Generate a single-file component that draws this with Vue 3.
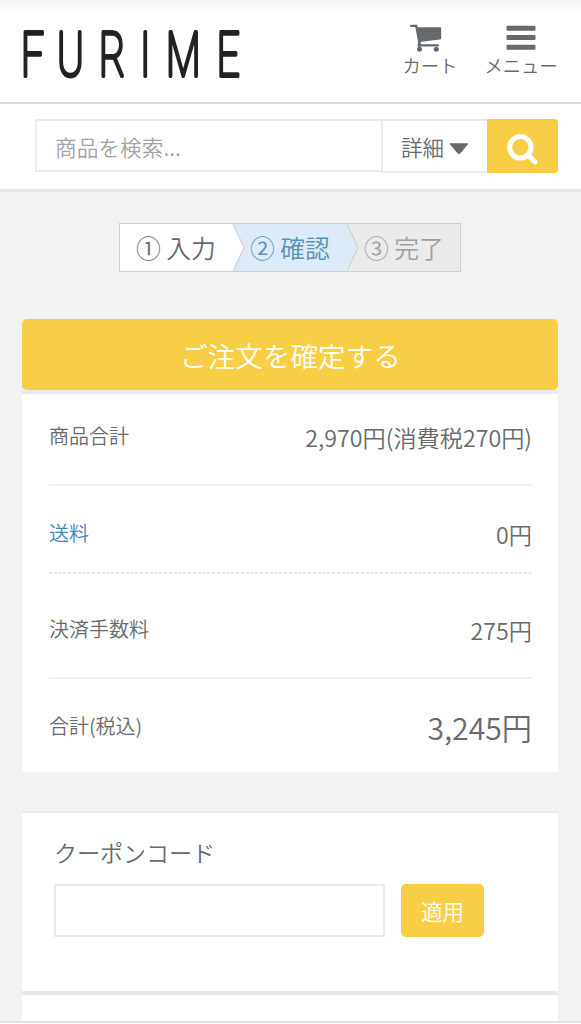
<template>
    <div class="page">
        <header class="header">
            <svg class="logo" width="222" height="56" viewBox="0 0 222 56">
                <text class="logo-text" transform="scale(0.65 1)" x="0 55.5 120 183 223 301" y="50">FURIME</text>
            </svg>
            <nav class="nav">
                <a class="nav-item cart">
                    <svg width="32" height="28" viewBox="0 0 32 28">
                        <path d="M1.3 1.9H6.3L9.8 20.5" fill="none" stroke="#666a6d" stroke-width="2.4" stroke-linecap="round" />
                        <path d="M6 3.3H30Q31.2 3.3 31.2 4.5V14Q31.2 15.3 30 15.4L9.5 18Z" fill="#666a6d" />
                        <path d="M9 16.5V25M8.5 21.3H28" fill="none" stroke="#666a6d" stroke-width="2.2" stroke-linecap="round" />
                        <circle cx="9.5" cy="25.2" r="2.5" fill="#666a6d" />
                        <circle cx="26.3" cy="25.2" r="2.5" fill="#666a6d" />
                    </svg>
                    <span>カート</span>
                </a>
                <a class="nav-item menu">
                    <svg width="30" height="28" viewBox="0 0 30 28">
                        <g fill="#666a6d">
                            <rect x="0.5" y="1.7" width="29" height="5" rx="1.2" />
                            <rect x="0.5" y="11" width="29" height="5" rx="1.2" />
                            <rect x="0.5" y="20.7" width="29" height="5" rx="1.2" />
                        </g>
                    </svg>
                    <span>メニュー</span>
                </a>
            </nav>
        </header>

        <form class="search" @submit.prevent>
            <input v-model="keyword" type="text" placeholder="商品を検索..." />
            <button type="button" class="detail">
                詳細
                <svg width="20" height="12" viewBox="0 0 20 12">
                    <path d="M1 .8H18.8L10.8 10.5Q10 11.4 9.2 10.5Z" fill="#666a6d" stroke="#666a6d" stroke-linejoin="round" />
                </svg>
            </button>
            <button type="submit" class="submit" aria-label="検索">
                <svg width="34" height="34" viewBox="0 0 34 34" fill="none" stroke="#fff">
                    <circle cx="14.3" cy="14.3" r="10.7" stroke-width="5" />
                    <path d="M22.5 22.5L29 29" stroke-width="5" stroke-linecap="round" />
                </svg>
            </button>
        </form>

        <main class="main">
            <ol class="steps">
                <li v-for="s in steps" :key="s.label" :class="s.state">
                    {{ s.label }}
                    <svg v-if="s.state !== 'todo'" class="arrow" width="12" height="47" viewBox="0 0 12 47">
                        <path d="M0 0L11 23.5L0 47Z" />
                        <path class="edge" d="M0 0L11 23.5L0 47" />
                    </svg>
                </li>
            </ol>

            <button class="confirm">ご注文を確定する</button>

            <section class="summary">
                <div v-for="r in rows" :key="r.label" class="row" :class="r.type">
                    <span class="label">{{ r.label }}</span>
                    <span class="value">{{ r.value }}</span>
                </div>
            </section>

            <section class="coupon">
                <label for="coupon">クーポンコード</label>
                <div class="coupon-form">
                    <input id="coupon" v-model="coupon" type="text" />
                    <button>適用</button>
                </div>
            </section>
            <section class="next"></section>
        </main>
        <div class="bottom-bar"></div>
    </div>
</template>

<script setup>
import { ref } from 'vue'

const keyword = ref('')
const coupon = ref('')

const steps = [
    { label: '① 入力', state: 'done' },
    { label: '② 確認', state: 'current' },
    { label: '③ 完了', state: 'todo' }
]

const rows = [
    { label: '商品合計', value: '2,970円(消費税270円)', type: 'subtotal' },
    { label: '送料', value: '0円', type: 'shipping' },
    { label: '決済手数料', value: '275円', type: 'fee' },
    { label: '合計(税込)', value: '3,245円', type: 'total' }
]
</script>

<style>
body {
    margin: 0;
    background: #f2f2f2;
}
</style>

<style scoped>
.page,
.page * {
    box-sizing: border-box;
}

.page {
    display: flex;
    flex-direction: column;
    height: 1024px;
    overflow: hidden;
    background: #f2f2f2;
    color: #666a6d;
    font-family: "Noto Sans CJK JP", sans-serif;
    font-weight: 350;
}

button,
input {
    margin: 0;
    padding: 0;
    border: 0;
    border-radius: 0;
    font-family: inherit;
    font-weight: inherit;
    color: inherit;
}

.header {
    display: flex;
    justify-content: space-between;
    flex: none;
    height: 104px;
    padding: 22px 22px 0 21px;
    border-bottom: 2px solid #d9d9db;
    background: linear-gradient(#f4f4f4, #fff 14px);
}

.logo {
    margin-top: 4px;
    overflow: visible;
}

.logo-text {
    font-family: Roboto, sans-serif;
    font-size: 62px;
    font-weight: 100;
    fill: #222;
    stroke: #222;
    stroke-width: 4.2;
    stroke-linejoin: round;
}

.nav {
    display: flex;
    gap: 23px;
}

.nav-item {
    display: flex;
    flex-direction: column;
    align-items: center;
    width: 60px;
    font-size: 18.3px;
    line-height: 28px;
    white-space: nowrap;
}

.nav-item.menu {
    width: 76px;
}

.nav-item svg {
    margin: 2px 0 -1px;
}

.nav-item.cart svg {
    margin-right: 8px;
}

.search {
    display: flex;
    flex: none;
    height: 88px;
    padding: 15px 23px 0 35px;
    border-bottom: 3px solid #e6eaed;
    background: #fff;
}

.search input {
    width: 346px;
    height: 53px;
    padding: 1px 0 0 18px;
    border: 2px solid #ebeced;
    border-right: 0;
    font-size: 21.7px;
}

.search input::placeholder {
    color: #a3a3a3;
    opacity: 1;
}

.detail {
    display: flex;
    align-items: center;
    gap: 5px;
    width: 106px;
    height: 54px;
    padding-left: 18px;
    border: 2px solid #e8ecee;
    border-right: 0;
    background: #fff;
    font-size: 21.5px;
}

.detail svg {
    margin-top: 5px;
}

.submit {
    display: flex;
    align-items: center;
    justify-content: center;
    width: 71px;
    height: 54px;
    border-radius: 0 4px 4px 0;
    background: #f8ce46;
}

.submit svg {
    margin-top: 8px;
}

.main {
    display: flex;
    flex-direction: column;
    flex: 1;
    min-height: 0;
    padding: 31px 23px 0 22px;
}

.steps {
    display: flex;
    align-self: center;
    width: 342px;
    height: 49px;
    margin: 0 0 47px;
    padding: 0;
    border: 1px solid #cfcfcf;
    list-style: none;
    font-size: 24.8px;
    line-height: 46px;
    white-space: nowrap;
}

.steps li {
    position: relative;
    width: 113px;
    padding-left: 16px;
}

.steps .done {
    background: #fff;
}

.steps .current {
    padding-left: 17px;
    width: 114px;
    background: #dcebf7;
    color: #5a93b5;
}

.steps .todo {
    padding-left: 17px;
    background: #ebebeb;
    color: #a0a0a0;
}

.arrow {
    position: absolute;
    top: 0;
    left: 100%;
    z-index: 1;
    fill: #fff;
}

.current .arrow {
    fill: #dcebf7;
}

.arrow .edge {
    fill: none;
    stroke: #d3d3d3;
    stroke-width: 1.3;
}

.confirm {
    flex: none;
    height: 71px;
    padding: 1px 0 0 1px;
    border-radius: 5px;
    background: #f8ce46;
    color: #fff;
    font-size: 27.6px;
    line-height: 70px;
}

.summary {
    flex: none;
    height: 382px;
    padding: 0 26px 0 27px;
    border-top: 4px solid #e6e9ed;
    background: #fff;
}

.row {
    display: flex;
    justify-content: space-between;
    height: 92px;
    padding-top: 26px;
    border-bottom: 2px solid #f0f1f2;
    font-size: 20px;
    line-height: 32px;
}

.value {
    font-size: 23.2px;
    line-height: 34px;
}

.row.shipping {
    height: 88px;
    padding-top: 31px;
    border-bottom: 0;
    background: repeating-linear-gradient(90deg, #eaebec 0 3px, #fff 3px 4.8px) bottom / 100% 2px no-repeat;
}

.shipping .label {
    color: #4a80bd;
}

.row.fee {
    height: 105px;
    padding-top: 39px;
}

.row.total {
    height: 93px;
    padding-top: 31px;
    border-bottom: 0;
}

.total .value {
    font-size: 30.2px;
}

.coupon {
    flex: none;
    height: 184px;
    margin-top: 39px;
    padding: 22px 32px 0;
    border-top: 2px solid #e8ecee;
    border-bottom: 4px solid #e6eaed;
    background: #fff;
}

.coupon label {
    display: block;
    height: 49px;
    font-size: 23px;
    line-height: 34px;
}

.coupon-form {
    display: flex;
    gap: 16px;
}

.coupon-form input {
    width: 331px;
    height: 53px;
    border: 2px solid #eaeaea;
    background: #fff;
}

.coupon-form button {
    width: 83px;
    height: 53px;
    border-radius: 5px;
    background: #f8ce46;
    color: #fff;
    font-size: 21.5px;
}

.next {
    flex: 1;
    background: #fff;
}

.bottom-bar {
    flex: none;
    height: 3px;
    border-top: 2px solid #e2e3e4;
    background: #fff;
}
</style>
